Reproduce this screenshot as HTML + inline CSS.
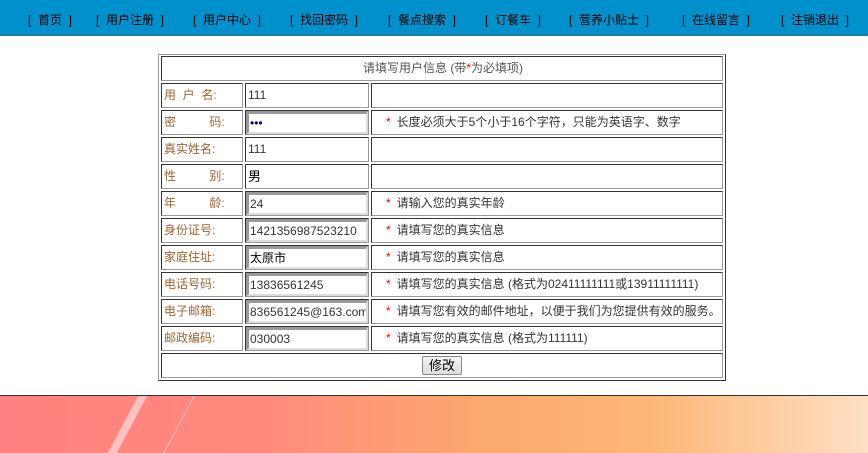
<!DOCTYPE html>
<html><head><meta charset="utf-8"><style>
*{margin:0;padding:0;box-sizing:border-box}
body{width:868px;height:453px;position:relative;background:#fff;font-family:"Liberation Sans","Noto Sans CJK SC",sans-serif;font-size:12px;overflow:hidden}
#nav{position:absolute;left:0;top:0;width:868px;height:36px;background:#0090cc;border-bottom:2px solid #1a7fa0}
#nav span{position:absolute;top:11px;font-size:12px;color:#000;white-space:pre}
#foot{position:absolute;left:0;top:395px;width:868px;height:58px;border-top:1px solid #333;background:linear-gradient(90deg,#ff8080 0%,#ff8a7c 30%,#fca86e 55%,#fdb678 75%,#fde0c4 100%);overflow:hidden}
#foot i{position:absolute;width:8px;height:90px;background:rgba(255,255,255,.5);transform:rotate(28deg);left:120px;top:-10px}
#foot b{position:absolute;width:1px;height:90px;background:rgba(255,255,255,.5);transform:rotate(28deg);left:175px;top:-10px}
#tbl{position:absolute;left:158px;top:54px;width:568px;height:327px;border:1px solid #999;border-right-color:#333;border-bottom-color:#333}
.c{position:absolute;border:1px solid #999;border-top-color:#333;border-left-color:#333;font-size:12px;line-height:23px;color:#333;padding-left:2px;white-space:pre}
.l{color:#996633}
.in{position:absolute;height:23px;border:2px solid #999;border-right-color:#ddd;border-bottom-color:#ddd;border-left-width:3px;border-top-width:3px;font-size:12px;line-height:18px;padding-left:1px;color:#000;overflow:hidden;white-space:nowrap;font-family:"Liberation Sans","Noto Sans CJK SC",sans-serif}
.s{color:#f00;padding:0 6px 0 12px}
.btn{position:absolute;left:422px;top:356px;width:40px;height:19px;border:1px solid #888;background:linear-gradient(#f4f4f4,#ddd);font-size:13px;text-align:center;line-height:17px;color:#000;border-radius:2px}
</style></head><body>
<div id="nav">
<span style="left:28px">[  首页  ]</span>
<span style="left:96px">[  用户注册  ]</span>
<span style="left:193px">[  用户中心  ]</span>
<span style="left:290px">[  找回密码  ]</span>
<span style="left:388px">[  餐点搜索  ]</span>
<span style="left:485px">[  订餐车  ]</span>
<span style="left:569px">[  营养小贴士  ]</span>
<span style="left:682px">[  在线留言  ]</span>
<span style="left:781px">[  注销退出  ]</span>
</div>
<div id="tbl"></div>
<div class="c" style="left:161px;top:56px;width:562px;height:25px;text-align:center;color:#555">请填写用户信息 (带<span style="color:#f00">*</span>为必填项)</div>

<div class="c l" style="left:161px;top:83px;width:82px;height:25px">用  户  名:</div>
<div class="c" style="left:245px;top:83px;width:124px;height:25px">111</div>
<div class="c" style="left:371px;top:83px;width:352px;height:25px"></div>

<div class="c l" style="left:161px;top:110px;width:82px;height:25px">密          码:</div>
<div class="c" style="left:245px;top:110px;width:124px;height:25px"></div>
<div class="in" style="left:246px;top:111px;width:122px;color:#006">•••</div>
<div class="c" style="left:371px;top:110px;width:352px;height:25px"><span class="s">*</span>长度必须大于5个小于16个字符，只能为英语字、数字</div>

<div class="c l" style="left:161px;top:137px;width:82px;height:25px">真实姓名:</div>
<div class="c" style="left:245px;top:137px;width:124px;height:25px">111</div>
<div class="c" style="left:371px;top:137px;width:352px;height:25px"></div>

<div class="c l" style="left:161px;top:164px;width:82px;height:25px">性          别:</div>
<div class="c" style="left:245px;top:164px;width:124px;height:25px;color:#000;font-size:13px">男</div>
<div class="c" style="left:371px;top:164px;width:352px;height:25px"></div>

<div class="c l" style="left:161px;top:191px;width:82px;height:25px">年          龄:</div>
<div class="c" style="left:245px;top:191px;width:124px;height:25px"></div>
<div class="in" style="left:246px;top:192px;width:122px;color:#333">24</div>
<div class="c" style="left:371px;top:191px;width:352px;height:25px"><span class="s">*</span>请输入您的真实年龄</div>

<div class="c l" style="left:161px;top:218px;width:82px;height:25px">身份证号:</div>
<div class="c" style="left:245px;top:218px;width:124px;height:25px"></div>
<div class="in" style="left:246px;top:219px;width:122px;color:#333">1421356987523210</div>
<div class="c" style="left:371px;top:218px;width:352px;height:25px"><span class="s">*</span>请填写您的真实信息</div>

<div class="c l" style="left:161px;top:245px;width:82px;height:25px">家庭住址:</div>
<div class="c" style="left:245px;top:245px;width:124px;height:25px"></div>
<div class="in" style="left:246px;top:246px;width:122px;color:#000">太原市</div>
<div class="c" style="left:371px;top:245px;width:352px;height:25px"><span class="s">*</span>请填写您的真实信息</div>

<div class="c l" style="left:161px;top:272px;width:82px;height:25px">电话号码:</div>
<div class="c" style="left:245px;top:272px;width:124px;height:25px"></div>
<div class="in" style="left:246px;top:273px;width:122px;color:#333">13836561245</div>
<div class="c" style="left:371px;top:272px;width:352px;height:25px"><span class="s">*</span>请填写您的真实信息 (格式为02411111111或13911111111)</div>

<div class="c l" style="left:161px;top:299px;width:82px;height:25px">电子邮箱:</div>
<div class="c" style="left:245px;top:299px;width:124px;height:25px"></div>
<div class="in" style="left:246px;top:300px;width:122px;color:#333">836561245@163.com</div>
<div class="c" style="left:371px;top:299px;width:352px;height:25px"><span class="s">*</span>请填写您有效的邮件地址，以便于我们为您提供有效的服务。</div>

<div class="c l" style="left:161px;top:326px;width:82px;height:25px">邮政编码:</div>
<div class="c" style="left:245px;top:326px;width:124px;height:25px"></div>
<div class="in" style="left:246px;top:327px;width:122px;color:#333">030003</div>
<div class="c" style="left:371px;top:326px;width:352px;height:25px"><span class="s">*</span>请填写您的真实信息 (格式为111111)</div>

<div class="c" style="left:161px;top:353px;width:562px;height:25px"></div>
<div class="btn">修改</div>

<div id="foot"><i></i><b></b></div>
</body></html>
